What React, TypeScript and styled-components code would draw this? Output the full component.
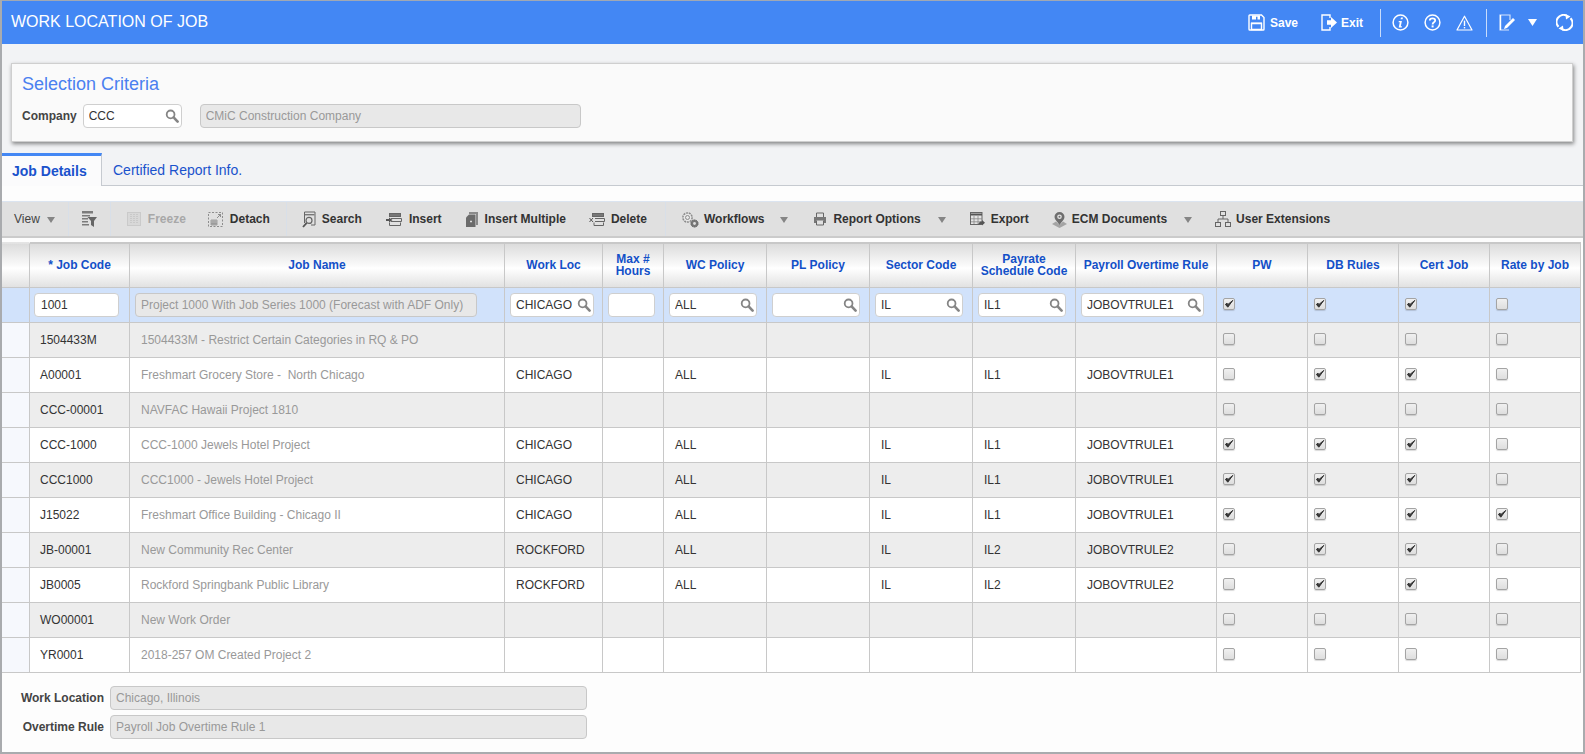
import React from "react";
import styled, { createGlobalStyle } from "styled-components";

const Global = createGlobalStyle`
  html, body { margin: 0; padding: 0; height: 754px; overflow: hidden; background: #f2f3f5; }
  * { box-sizing: border-box; }
  body, input { font-family: "Liberation Sans", Arial, sans-serif; }
`;

const Page = styled.div`
  width: 1585px; height: 754px; display: flex; flex-direction: column;
  border-left: 2px solid #a9abae; border-right: 2px solid #a9abae; border-bottom: 2px solid #a9abae;
  background: #f2f3f5; overflow: hidden;
`;
const Header = styled.header`
  height: 44px; flex: none; margin-left: -1px; display: flex; align-items: center;
  background: #4387f4; border-top: 1px solid #a0a8b4; padding-left: 10px; color: #fff;
`;
const Title = styled.h1`
  margin: 0; flex: 1; font-size: 16px; font-weight: 400; color: #fff; position: relative; top: -1px;
`;
const HeadAction = styled.div<{ $ml: number; $gap?: number }>`
  display: flex; align-items: center; margin-left: ${p => p.$ml}px; gap: ${p => p.$gap ?? 6}px;
  font-size: 12px; font-weight: 700; color: #fff;
`;
const HeadSep = styled.span<{ $ml: number }>`
  width: 1px; height: 28px; background: #c9dcfb; margin-left: ${p => p.$ml}px;
`;
const HeadIcons = styled.div`
  display: flex; align-items: center; padding-right: 10px;
`;

const Panel = styled.section`
  margin: 19px 10px 0 9px; height: 79px; flex: none; background: #fafafa; border: 1px solid #cfcfcf;
  box-shadow: 1px 2px 4px rgba(0,0,0,.45); padding: 10px 10px 0;
`;
const PanelTitle = styled.h2`
  margin: 0; font-size: 18px; font-weight: 400; color: #4a80f0; line-height: 20px;
`;
const FormRow = styled.div<{ $mt?: number }>`
  display: flex; align-items: center; margin-top: ${p => p.$mt ?? 0}px;
`;
const Label = styled.label<{ $w?: number }>`
  font-size: 12px; font-weight: 700; color: #444; ${p => p.$w ? `width:${p.$w}px; text-align:right;` : ""}
`;
const ReadOnly = styled.input<{ $w: number; $ml?: number }>`
  width: ${p => p.$w}px; height: 24px; margin-left: ${p => p.$ml ?? 0}px; padding: 0 5px;
  background: #e8e8e8; border: 1px solid #c8c8c8; border-radius: 4px; font-size: 12px; color: #999; outline: none;
`;
const Plain = styled.input<{ $w: number }>`
  width: ${p => p.$w}px; height: 24px; padding: 0 6px; background: #fff; border: 1px solid #cfcfcf;
  border-radius: 4px; font-size: 12px; color: #333; outline: none; display: block;
`;
const Lookup = styled.div<{ $w: number; $ml?: number }>`
  width: ${p => p.$w}px; height: 24px; margin-left: ${p => p.$ml ?? 0}px; display: flex; align-items: center;
  background: #fff; border: 1px solid #cfcfcf; border-radius: 4px; padding-right: 2px;
`;
const LookupInput = styled.input`
  flex: 1; min-width: 0; height: 100%; border: 0; background: transparent; outline: none; padding: 0 0 0 5px;
  font-size: 12px; color: #333;
`;

const TabStrip = styled.nav`
  margin-top: 11px; height: 33px; flex: none; display: flex; border-bottom: 1px solid #c6cad0;
`;
const Tab = styled.div<{ $active?: boolean }>`
  height: 33px; display: flex; align-items: center; font-size: 14px; color: #1a52cc;
  ${p => p.$active
    ? `width: 100px; padding-left: 10px; font-weight: 700; background: #fbfbfc; border-top: 3px solid #4387f4; border-right: 1px solid #c6cad0;`
    : `padding-left: 11px; padding-top: 0;`}
`;
const Body = styled.main`
  flex: 1; background: #fdfdfd; padding-top: 15px; display: flex; flex-direction: column;
`;
const Toolbar = styled.div`
  height: 37px; flex: none; display: flex; align-items: center; background: #e0e0e0;
  border-top: 1px solid #dbe4f0; border-bottom: 2px solid #cbcbcb; font-size: 12px; color: #333;
`;
const ToolText = styled.span<{ $ml?: number }>`
  margin-left: ${p => p.$ml ?? 0}px; color: #444;
`;
const ToolButton = styled.div<{ $ml: number; $gap: number; $off?: boolean }>`
  display: flex; align-items: center; margin-left: ${p => p.$ml}px; gap: ${p => p.$gap}px;
  font-weight: 700; white-space: nowrap; color: ${p => p.$off ? "#a8a8a8" : "#333"};
`;
const ToolCaret = styled.span<{ $ml: number }>`
  width: 0; height: 0; margin-left: ${p => p.$ml}px; margin-top: 2px;
  border-left: 4.5px solid transparent; border-right: 4.5px solid transparent; border-top: 6px solid #858585;
`;
const ToolSep = styled.span<{ $ml: number }>`
  width: 1px; height: 34px; background: #d8dfe8; margin-left: ${p => p.$ml}px;
`;
const IconSlot = styled.span<{ $ml?: number }>`
  display: inline-flex; margin-left: ${p => p.$ml ?? 0}px;
`;

const Grid = styled.table`
  margin-top: 4px; width: 1579px; table-layout: fixed; border-collapse: separate; border-spacing: 0; flex: none;
`;
const HeadCell = styled.th<{ $corner?: boolean }>`
  height: 46px; padding: 0 2px 1px; text-align: center; vertical-align: middle;
  font-size: 12px; line-height: 12.5px; font-weight: 700; color: #1350c8;
  background: linear-gradient(#dcdcdc 0%, #fafafa 50%, #ffffff 56%, #e2e2e2 100%);
  border-right: 1px solid #c8c8c8; border-bottom: 1px solid #c8c8c8;
  border-top: 2px solid ${p => p.$corner ? "transparent" : "#c8c8c8"};
`;
const Row = styled.tr<{ $tone: "sel" | "grey" | "white" }>`
  background: ${p => p.$tone === "sel" ? "#d1e2fb" : p.$tone === "grey" ? "#ededed" : "#ffffff"};
`;
const Cell = styled.td<{ $muted?: boolean; $pad?: number }>`
  height: 35px; padding: 0 0 0 ${p => p.$pad ?? 11}px; font-size: 12px; white-space: pre; overflow: hidden;
  color: ${p => p.$muted ? "#999" : "#333"};
  border-right: 1px solid #c8c8c8; border-bottom: 1px solid #c8c8c8;
`;
const RowHead = styled.td<{ $sel?: boolean }>`
  height: 35px; padding: 0; background: ${p => p.$sel ? "#d1e2fb" : "#f6f8fd"};
  border-right: 1px solid #c8c8c8; border-bottom: 1px solid #c8c8c8;
`;
const Check = styled.span`
  width: 12px; height: 12px; display: flex; align-items: center; justify-content: center;
  border: 1px solid #a4a4a4; border-radius: 2px; background: linear-gradient(#f0f0f0, #dedede);
  box-shadow: 0 1px 1px rgba(0,0,0,.15); margin-top: -2px;
`;
const Footer = styled.footer`
  padding-top: 13px; display: flex; flex-direction: column; gap: 5px;
`;

const W = { fill: "none", stroke: "#fff", strokeWidth: 1.4 } as const;
const G = { fill: "none", stroke: "#666", strokeWidth: 1 } as const;

const SearchGlyph = () => (
  <svg width="14" height="14" viewBox="0 0 14 14" style={{ flex: "none" }}>
    <circle cx="5.6" cy="5.4" r="3.9" fill="none" stroke="#858585" strokeWidth="1.8" />
    <path d="M8.6 8.4 12.6 12.6" stroke="#858585" strokeWidth="2.6" strokeLinecap="round" />
  </svg>
);
const CheckMark = () => (
  <svg width="10" height="10" viewBox="0 0 10 10">
    <path d="M1.4 5.4 3.8 8.2 8.8 1.4 4 5.4 3 4.2Z" fill="#333" stroke="#333" strokeWidth="1" strokeLinejoin="round" />
  </svg>
);
const IconSave = () => (
  <svg width="17" height="17" viewBox="0 0 17 17">
    <path d="M1 1.8Q1 1 1.8 1H13.5L16 3.5V15.2Q16 16 15.2 16H1.8Q1 16 1 15.2Z" {...W} />
    <path d="M4 1.5H12V5.5H9.5V2.8H8V5.5H4Z" fill="#fff" />
    <path d="M3.5 9.5H13.5V15.5H3.5Z" {...W} />
    <path d="M3 8.5H14V10H3Z" fill="#fff" />
  </svg>
);
const IconExit = () => (
  <svg width="17" height="17" viewBox="0 0 17 17">
    <path d="M9 4V1H1V16H9V13" {...W} />
    <path d="M6 6.3H10V3L16 8.5 10 14V10.7H6Z" fill="#fff" />
  </svg>
);
const IconInfo = () => (
  <svg width="17" height="17" viewBox="0 0 17 17">
    <circle cx="8.5" cy="8.5" r="7.4" fill="none" stroke="#fff" strokeWidth="1.5" />
    <path d="M9 3.4H11L10.6 5.3H8.6Z" fill="#fff" />
    <path d="M6.8 7.1H9.9L8.8 12.2H10L9.7 13.4H6.7L7.8 8.2H6.6Z" fill="#fff" />
  </svg>
);
const IconHelp = () => (
  <svg width="17" height="17" viewBox="0 0 17 17">
    <circle cx="8.5" cy="8.5" r="7.4" fill="none" stroke="#fff" strokeWidth="1.5" />
    <path d="M5.8 6.6C5.8 3.6 11.2 3.6 11.2 6.6C11.2 8.4 8.6 8.3 8.6 10.4" fill="none" stroke="#fff" strokeWidth="1.8" />
    <rect x="7.6" y="11.4" width="2" height="2" fill="#fff" />
  </svg>
);
const IconWarn = () => (
  <svg width="17" height="16" viewBox="0 0 17 16">
    <path d="M8.5 1.2 16 15H1Z" fill="none" stroke="#fff" strokeWidth="1.2" strokeLinejoin="round" />
    <rect x="7.8" y="5.6" width="1.4" height="5.4" fill="#fff" />
    <rect x="7.8" y="12" width="1.4" height="1.4" fill="#fff" />
  </svg>
);
const IconEdit = () => (
  <svg width="17" height="17" viewBox="0 0 17 17">
    <path d="M10 16H1V1H11V6" fill="none" stroke="#d5e3fb" strokeWidth="1.2" />
    <path d="M1.6 1V16" stroke="#fff" strokeWidth="1.2" />
    <path d="M5 15 6 12 14 4 16 6 8 14Z" fill="#fff" />
  </svg>
);
const IconCaretW = () => (
  <svg width="9" height="7" viewBox="0 0 9 7"><path d="M0 0H9L4.5 7Z" fill="#fff" /></svg>
);
const IconRefresh = () => (
  <svg width="17" height="17" viewBox="0 0 17 17">
    <path d="M2.5 12.8A7 7 0 0 1 10.5 1.6" fill="none" stroke="#fff" strokeWidth="2.1" />
    <path d="M14.5 4.2A7 7 0 0 1 6.5 15.4" fill="none" stroke="#fff" strokeWidth="2.1" />
    <path d="M9.5 0 14.5 2.6 10 5.5Z" fill="#fff" />
    <path d="M7.5 17 2.5 14.4 7 11.5Z" fill="#fff" />
  </svg>
);

const IFilter = () => (
  <svg width="16" height="16" viewBox="0 0 16 16">
    <path d="M1 0H12V2.4H1ZM1 4H9V5.4H1ZM1 7H7V8.4H1ZM1 10H7V11.4H1ZM1 13H8V14.4H1Z" fill="#7c7c7c" />
    <path d="M6.5 6H16L13 10V16L10 14V10Z" fill="#666" />
  </svg>
);
const IFreeze = () => (
  <svg width="14" height="14" viewBox="0 0 14 14">
    <rect x=".5" y=".5" width="13" height="13" fill="#d8d8d8" stroke="#cacaca" />
    <path d="M4 2V12M7 2V12M10 2V12" stroke="#bababa" strokeDasharray="1 1" fill="none" />
  </svg>
);
const IDetach = () => (
  <svg width="15" height="15" viewBox="0 0 15 15">
    <rect x=".5" y=".5" width="14" height="14" fill="none" stroke="#777" strokeWidth=".8" strokeDasharray="2 1.5" />
    <path d="M3 8H9V13H3ZM3 10H9M3 11.7H9M5 8V13M7 8V13" fill="none" stroke="#777" strokeWidth=".6" />
    <path d="M9 6 12.5 2.5M10 2.5H12.5V5" fill="none" stroke="#777" strokeWidth=".8" />
  </svg>
);
const ISearch = () => (
  <svg width="14" height="17" viewBox="0 0 14 17">
    <path d="M2.5 12V1H13V14H9" {...G} />
    <path d="M3 3H12.5V4.4H3Z" fill="#777" />
    <circle cx="7" cy="9.4" r="3" {...G} strokeWidth={1.2} />
    <path d="M4.7 11.8 1 16" stroke="#555" strokeWidth="1.8" />
  </svg>
);
const IInsert = () => (
  <svg width="16" height="13" viewBox="0 0 16 13">
    <rect x="3.5" y=".5" width="11" height="3" fill="#777" stroke="#666" />
    <path d="M5 5.5H15.5V8.5H5M3.5 9.5V12.5H14.5V9.5" {...G} />
    <path d="M0 6H3V4.5L6.5 7 3 9.5V8H0Z" fill="#555" />
  </svg>
);
const IMulti = () => (
  <svg width="12" height="15" viewBox="0 0 12 15">
    <path d="M3 0H12V13H10V2H3Z" fill="#8a8a8a" />
    <path d="M3 2.5H9.5V15H0V5.5Z" fill="#6b6b6b" />
    <path d="M4 9.5H6M5 8.5V10.5" stroke="#ddd" />
  </svg>
);
const IDelete = () => (
  <svg width="16" height="13" viewBox="0 0 16 13">
    <rect x="3.5" y=".5" width="11" height="3" fill="#777" stroke="#666" />
    <path d="M6 5.5H15.5V8.5H6M5 9.5V12.5H14.5V9.5" {...G} />
    <path d="M.5 5 4 9M4 5 .5 9" stroke="#555" />
  </svg>
);
const IGears = () => (
  <svg width="18" height="17" viewBox="0 0 18 17">
    <circle cx="6.5" cy="6.5" r="4.6" fill="#e8e8e8" stroke="#8c8c8c" strokeWidth="1.5" strokeDasharray="2 .8" />
    <circle cx="6.5" cy="6.5" r="2" fill="none" stroke="#8c8c8c" />
    <circle cx="13.5" cy="12.5" r="3.6" fill="#777" stroke="#666" strokeWidth="1" strokeDasharray="1.6 .6" />
    <circle cx="13.5" cy="12.5" r="1.4" fill="#e0e0e0" />
  </svg>
);
const IPrint = () => (
  <svg width="14" height="14" viewBox="0 0 14 14">
    <path d="M3.5 5V1H10.5V5" {...G} />
    <path d="M1 5H13V11H11V8.5H3V11H1Z" fill="#777" />
    <path d="M3.5 8.5V13H10.5V8.5" {...G} />
  </svg>
);
const IExport = () => (
  <svg width="15" height="15" viewBox="0 0 15 15">
    <rect x=".5" y=".5" width="11.5" height="12" fill="#e4e4e4" stroke="#666" />
    <path d="M.5 2.5H12" stroke="#555" strokeWidth="2" />
    <path d="M4 4V12M8 4V12M1 6.8H12M1 9.8H12" stroke="#888" strokeWidth=".8" />
    <path d="M8 12.5C9 10 10.5 9.5 12 9.5V8L15 10.8 12 13.5V12C10.5 11.8 9.4 12 8 12.5Z" fill="#555" />
  </svg>
);
const IEcm = () => (
  <svg width="15" height="17" viewBox="0 0 15 17">
    <path d="M0 13 4 10.5 7.5 14 11 10.5 15 13 7.5 17Z" fill="#a4a4a4" />
    <path d="M7.5 1A5 5 0 0 0 2.5 6C2.5 8.5 5.5 11 7.5 14 9.5 11 12.5 8.5 12.5 6A5 5 0 0 0 7.5 1Z" fill="#6e6e6e" />
    <circle cx="7.5" cy="5.8" r="2.3" fill="#e6e6e6" />
    <circle cx="7.5" cy="5.8" r="1" fill="#6e6e6e" />
  </svg>
);
const IUsers = () => (
  <svg width="16" height="16" viewBox="0 0 16 16">
    <rect x="5.5" y=".5" width="5" height="4" {...G} />
    <rect x=".5" y="11.5" width="5" height="4" {...G} />
    <rect x="10.5" y="11.5" width="5" height="4" {...G} />
    <path d="M8 4.5V8M3 11.5V8H13V11.5" {...G} />
  </svg>
);

type Job = { code: string; name: string; loc?: string; wc?: string; sector?: string; pay?: string; rule?: string; checks: boolean[] };
const chi = { loc: "CHICAGO", wc: "ALL", sector: "IL", pay: "IL1", rule: "JOBOVTRULE1" };
const roc = { loc: "ROCKFORD", wc: "ALL", sector: "IL", pay: "IL2", rule: "JOBOVTRULE2" };
const none = [false, false, false, false];
const jobs: Job[] = [
  { code: "1504433M", name: "1504433M - Restrict Certain Categories in RQ & PO", checks: none },
  { code: "A00001", name: "Freshmart Grocery Store -  North Chicago", ...chi, checks: [false, true, true, false] },
  { code: "CCC-00001", name: "NAVFAC Hawaii Project 1810", checks: none },
  { code: "CCC-1000", name: "CCC-1000 Jewels Hotel Project", ...chi, checks: [true, true, true, false] },
  { code: "CCC1000", name: "CCC1000 - Jewels Hotel Project", ...chi, checks: [true, true, true, false] },
  { code: "J15022", name: "Freshmart Office Building - Chicago II", ...chi, checks: [true, true, true, true] },
  { code: "JB-00001", name: "New Community Rec Center", ...roc, checks: [false, true, true, false] },
  { code: "JB0005", name: "Rockford Springbank Public Library", ...roc, checks: [false, true, true, false] },
  { code: "WO00001", name: "New Work Order", checks: none },
  { code: "YR0001", name: "2018-257 OM Created Project 2", checks: none },
];
const widths = [28, 100, 375, 98, 61, 103, 103, 103, 103, 141, 91, 91, 91, 91];
const heads: React.ReactNode[] = [
  "", "* Job Code", "Job Name", "Work Loc", <>Max #<br />Hours</>, "WC Policy", "PL Policy", "Sector Code",
  <>Payrate<br />Schedule Code</>, "Payroll Overtime Rule", "PW", "DB Rules", "Cert Job", "Rate by Job",
];

const Box = ({ on }: { on: boolean }) => <Check role="checkbox" aria-checked={on}>{on && <CheckMark />}</Check>;
const Field = ({ w, value }: { w: number; value?: string }) => (
  <Lookup $w={w}>
    <LookupInput readOnly value={value ?? ""} />
    <SearchGlyph />
  </Lookup>
);

export default function App() {
  return (
    <Page>
      <Global />
      <Header>
        <Title>WORK LOCATION OF JOB</Title>
        <HeadIcons>
          <HeadAction $ml={0} $gap={5}><IconSave />Save</HeadAction>
          <HeadAction $ml={23} $gap={3}><IconExit />Exit</HeadAction>
          <HeadSep $ml={17} />
          <HeadAction $ml={11}><IconInfo /></HeadAction>
          <HeadAction $ml={15}><IconHelp /></HeadAction>
          <HeadAction $ml={15}><IconWarn /></HeadAction>
          <HeadSep $ml={13} />
          <HeadAction $ml={12}><IconEdit /></HeadAction>
          <HeadAction $ml={12}><IconCaretW /></HeadAction>
          <HeadAction $ml={19}><IconRefresh /></HeadAction>
        </HeadIcons>
      </Header>
      <Panel>
        <PanelTitle>Selection Criteria</PanelTitle>
        <FormRow $mt={10}>
          <Label>Company</Label>
          <Lookup $w={99} $ml={6}>
            <LookupInput readOnly value="CCC" />
            <SearchGlyph />
          </Lookup>
          <ReadOnly $w={381} $ml={18} readOnly value="CMiC Construction Company" />
        </FormRow>
      </Panel>
      <TabStrip>
        <Tab $active>Job Details</Tab>
        <Tab>Certified Report Info.</Tab>
      </TabStrip>
      <Body>
        <Toolbar>
          <ToolText $ml={12}>View</ToolText>
          <ToolCaret $ml={7} />
          <ToolSep $ml={13} />
          <IconSlot $ml={12}><IFilter /></IconSlot>
          <ToolSep $ml={13} />
          <ToolButton $ml={16} $gap={7} $off><IFreeze />Freeze</ToolButton>
          <ToolButton $ml={22} $gap={7}><IDetach />Detach</ToolButton>
          <ToolSep $ml={16} />
          <ToolButton $ml={15} $gap={6}><ISearch />Search</ToolButton>
          <ToolButton $ml={24} $gap={7}><IInsert />Insert</ToolButton>
          <ToolButton $ml={24} $gap={7}><IMulti />Insert Multiple</ToolButton>
          <ToolButton $ml={23} $gap={6}><IDelete />Delete</ToolButton>
          <ToolSep $ml={18} />
          <ToolButton $ml={15} $gap={5}><IGears />Workflows</ToolButton>
          <ToolCaret $ml={16} />
          <ToolButton $ml={25} $gap={6}><IPrint />Report Options</ToolButton>
          <ToolCaret $ml={17} />
          <ToolButton $ml={24} $gap={6}><IExport />Export</ToolButton>
          <ToolButton $ml={23} $gap={5}><IEcm />ECM Documents</ToolButton>
          <ToolCaret $ml={17} />
          <ToolButton $ml={23} $gap={5}><IUsers />User Extensions</ToolButton>
        </Toolbar>
        <Grid>
          <colgroup>{widths.map((w, i) => <col key={i} style={{ width: w }} />)}</colgroup>
          <thead>
            <tr>{heads.map((h, i) => <HeadCell key={i} $corner={i === 0}>{h}</HeadCell>)}</tr>
          </thead>
          <tbody>
            <Row $tone="sel">
              <RowHead $sel />
              <Cell $pad={4}><Plain $w={85} readOnly value="1001" /></Cell>
              <Cell $pad={5}><ReadOnly $w={342} readOnly value="Project 1000 With Job Series 1000 (Forecast with ADF Only)" /></Cell>
              <Cell $pad={5}><Field w={84} value="CHICAGO" /></Cell>
              <Cell $pad={5}><Plain $w={47} readOnly value="" /></Cell>
              <Cell $pad={5}><Field w={88} value="ALL" /></Cell>
              <Cell $pad={5}><Field w={88} /></Cell>
              <Cell $pad={5}><Field w={88} value="IL" /></Cell>
              <Cell $pad={5}><Field w={88} value="IL1" /></Cell>
              <Cell $pad={5}><Field w={123} value="JOBOVTRULE1" /></Cell>
              {[true, true, true, false].map((c, i) => <Cell key={i} $pad={6}><Box on={c} /></Cell>)}
            </Row>
            {jobs.map((j, i) => (
              <Row key={j.code} $tone={i % 2 === 0 ? "grey" : "white"}>
                <RowHead />
                <Cell $pad={10}>{j.code}</Cell>
                <Cell $muted>{j.name}</Cell>
                <Cell>{j.loc}</Cell>
                <Cell />
                <Cell>{j.wc}</Cell>
                <Cell />
                <Cell>{j.sector}</Cell>
                <Cell>{j.pay}</Cell>
                <Cell>{j.rule}</Cell>
                {j.checks.map((c, k) => <Cell key={k} $pad={6}><Box on={c} /></Cell>)}
              </Row>
            ))}
          </tbody>
        </Grid>
        <Footer>
          <FormRow>
            <Label $w={102}>Work Location</Label>
            <ReadOnly $w={477} $ml={6} readOnly value="Chicago, Illinois" />
          </FormRow>
          <FormRow>
            <Label $w={102}>Overtime Rule</Label>
            <ReadOnly $w={477} $ml={6} readOnly value="Payroll Job Overtime Rule 1" />
          </FormRow>
        </Footer>
      </Body>
    </Page>
  );
}
